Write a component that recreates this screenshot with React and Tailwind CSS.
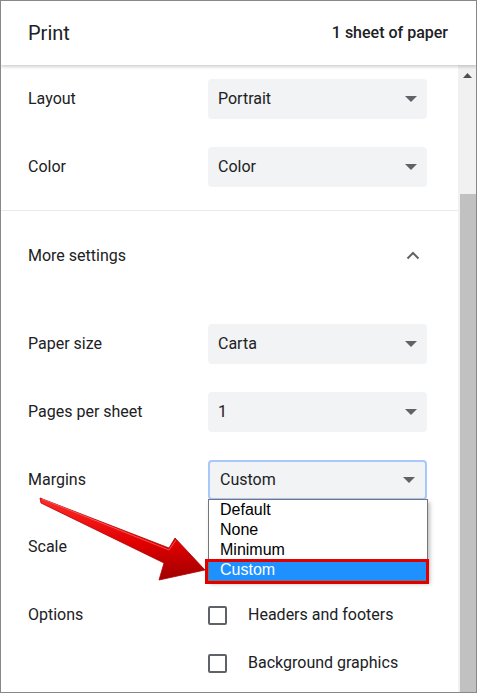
import React from "react";

const font = { fontFamily: "Roboto, 'Liberation Sans', Arial, sans-serif" };

function Caret() {
  return (
    <svg width="12" height="6" viewBox="0 0 12 6" className="shrink-0">
      <path d="M0 0h12L6 6z" fill="#5f6368" />
    </svg>
  );
}

function Select({ value, focused }) {
  return (
    <div
      className={
        "w-[219px] h-[40px] rounded-[4px] bg-[#f1f3f4] flex items-center justify-between pl-[10px] pr-[10px] text-[16px] text-[#202124] " +
        (focused ? "border-2 border-[#a8c7fa] pl-[8px] pr-[8px]" : "")
      }
    >
      <span>{value}</span>
      <Caret />
    </div>
  );
}

function Row({ label, children, h = "h-[68px]" }) {
  return (
    <div className={"flex items-center pl-[27px] " + h}>
      <div className="w-[180px] text-[16px] text-[#202124]">{label}</div>
      {children}
    </div>
  );
}

function Checkbox({ label }) {
  return (
    <div className="flex items-center">
      <div className="w-[19px] h-[19px] border-2 border-[#5f6368] rounded-[2px]" />
      <span className="ml-[21px] text-[16px] text-[#202124]">{label}</span>
    </div>
  );
}

function Arrow() {
  return (
    <svg
      className="absolute left-0 top-0 pointer-events-none"
      width="477"
      height="693"
      viewBox="0 0 477 693"
    >
      <defs>
        <linearGradient id="ar" x1="0" y1="0" x2="0" y2="1">
          <stop offset="0" stopColor="#ff2a2a" />
          <stop offset="0.55" stopColor="#e00000" />
          <stop offset="1" stopColor="#a00000" />
        </linearGradient>
      </defs>
      <polygon
        points="39,497 168,547 174,537 204,569 158,579 163,562 40,502"
        fill="url(#ar)"
        stroke="#b00000"
        strokeWidth="0.8"
        strokeLinejoin="round"
      />
      <polyline
        points="41,498 168,549 175,539"
        fill="none"
        stroke="#ff7070"
        strokeWidth="1"
        opacity="0.7"
      />
    </svg>
  );
}

export default function App() {
  return (
    <div
      style={font}
      className="relative w-[477px] h-[693px] border border-[#888888] bg-white overflow-hidden flex flex-col"
    >
      <header className="h-[64px] shrink-0 flex items-center justify-between pl-[27px] pr-[28px] shadow-[0_2px_3px_rgba(0,0,0,0.18)] relative z-10 bg-white">
        <span className="text-[20px] text-[#202124]">Print</span>
        <span className="text-[16px] font-medium text-[#202124]">1 sheet of paper</span>
      </header>
      <div className="flex flex-1 min-h-0">
        <div className="flex-1 flex flex-col">
          <Row label="Layout">
            <Select value="Portrait" />
          </Row>
          <Row label="Color">
            <Select value="Color" />
          </Row>
          <div className="mt-[9px] border-t border-[#e8eaed]" />
          <div className="h-[89px] flex items-center justify-between pl-[27px] pr-[38px]">
            <span className="text-[16px] text-[#202124]">More settings</span>
            <svg width="14" height="9" viewBox="0 0 14 9">
              <path d="M1.5 7.5L7 2l5.5 5.5" fill="none" stroke="#5f6368" strokeWidth="2" />
            </svg>
          </div>
          <div className="h-[10px]" />
          <Row label="Paper size">
            <Select value="Carta" />
          </Row>
          <Row label="Pages per sheet">
            <Select value="1" />
          </Row>
          <Row label="Margins" h="h-[67px]">
            <Select value="Custom" focused />
          </Row>
          <Row label="Scale">
            <div />
          </Row>
          <div className="h-[10px]" />
          <Row label="Options" h="h-[48px]">
            <Checkbox label="Headers and footers" />
          </Row>
          <Row label="" h="h-[48px]">
            <Checkbox label="Background graphics" />
          </Row>
        </div>
        <div className="w-[18px] bg-[#f1f1f1] flex flex-col">
          <div className="h-[20px] flex items-center justify-center">
            <svg width="9" height="5" viewBox="0 0 9 5">
              <path d="M0 5L4.5 0 9 5z" fill="#505050" />
            </svg>
          </div>
          <div className="h-[109px]" />
          <div className="flex-1 ml-[2px] bg-[#c1c1c1]" />
        </div>
      </div>

      <div className="absolute left-[207px] top-[498px] w-[220px] border border-[#767676] bg-white shadow-[2px_3px_4px_rgba(0,0,0,0.25)] text-[16px] leading-[20px] text-black z-20" style={{ fontFamily: "'Liberation Sans', Arial, sans-serif" }}>
        <div className="pl-[11px]">Default</div>
        <div className="pl-[11px]">None</div>
        <div className="pl-[11px]">Minimum</div>
        <div className="pl-[11px] bg-[#1e90ff] text-white">Custom</div>
      </div>
      <div className="absolute left-[204px] top-[558px] w-[224px] h-[25px] border-[3px] border-[#e00000] z-30" />
      <div className="z-40">
        <Arrow />
      </div>
    </div>
  );
}
